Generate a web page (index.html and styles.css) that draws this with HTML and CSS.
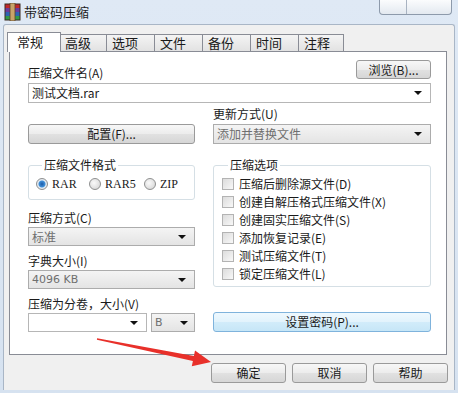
FILE: index.html
```html
<!DOCTYPE html>
<html lang="zh-CN">
<head>
    <meta charset="UTF-8">
    <title>带密码压缩</title>
    <link rel="stylesheet" href="styles.css">
</head>
<body>
    <div class="window">
        <div class="titlebar">
            <svg class="app-icon" width="19" height="18" viewBox="0 0 19 18">
                <rect x="2" y="1" width="15" height="4" fill="#c0282d"/>
                <rect x="2" y="5" width="15" height="4" fill="#6a3b9c"/>
                <rect x="2" y="9" width="15" height="4" fill="#2c64b4"/>
                <rect x="2" y="13" width="15" height="4" fill="#2f9a47"/>
                <rect x="2" y="1" width="15" height="16" fill="none" stroke="#3a2a20" stroke-width="1"/>
                <rect x="7" y="0" width="5" height="18" fill="#c7a36a" stroke="#5a4326" stroke-width="0.8"/>
            </svg>
            <span class="title">带密码压缩</span>
            <div class="caption-btns"><span></span><span></span></div>
        </div>

        <div class="frame">
            <div class="tabs">
                <div class="tab active">常规</div>
                <div class="tab first">高级</div>
                <div class="tab">选项</div>
                <div class="tab">文件</div>
                <div class="tab">备份</div>
                <div class="tab">时间</div>
                <div class="tab last">注释</div>
            </div>

            <div class="panel">
                <div class="row-top">
                    <span class="lbl">压缩文件名(A)</span>
                    <div class="btn btn-browse">浏览(B)...</div>
                </div>
                <div class="combo combo-name"><span>测试文档.rar</span><i class="arrow"></i></div>

                <div class="cols">
                    <div class="col">
                        <div class="btn btn-config">配置(F)...</div>
                        <fieldset class="group group-format">
                            <legend>压缩文件格式</legend>
                            <div class="radios">
                                <label class="radio checked"><i></i>RAR</label>
                                <label class="radio"><i></i>RAR5</label>
                                <label class="radio"><i></i>ZIP</label>
                            </div>
                        </fieldset>
                        <div class="field">
                            <span class="lbl">压缩方式(C)</span>
                            <div class="combo dim"><span>标准</span><i class="arrow"></i></div>
                        </div>
                        <div class="field">
                            <span class="lbl">字典大小(I)</span>
                            <div class="combo dim"><span class="latin">4096 KB</span><i class="arrow"></i></div>
                        </div>
                        <div class="field">
                            <span class="lbl">压缩为分卷，大小(V)</span>
                            <div class="split">
                                <div class="combo combo-vol"><span></span><i class="arrow"></i></div>
                                <div class="combo combo-unit dim"><span class="latin">B</span><i class="arrow"></i></div>
                            </div>
                        </div>
                    </div>

                    <div class="col">
                        <span class="lbl lbl-update">更新方式(U)</span>
                        <div class="combo dim combo-update"><span>添加并替换文件</span><i class="arrow"></i></div>
                        <fieldset class="group group-options">
                            <legend>压缩选项</legend>
                            <label class="check"><i></i>压缩后删除源文件(D)</label>
                            <label class="check"><i></i>创建自解压格式压缩文件(X)</label>
                            <label class="check"><i></i>创建固实压缩文件(S)</label>
                            <label class="check"><i></i>添加恢复记录(E)</label>
                            <label class="check"><i></i>测试压缩文件(T)</label>
                            <label class="check"><i></i>锁定压缩文件(L)</label>
                        </fieldset>
                        <div class="btn btn-pass">设置密码(P)...</div>
                    </div>
                </div>
            </div>

            <div class="actions">
                <div class="btn btn-action">确定</div>
                <div class="btn btn-action">取消</div>
                <div class="btn btn-action">帮助</div>
            </div>
        </div>

        <svg class="pointer" width="458" height="393" viewBox="0 0 458 393">
            <polygon fill="#e8302a" points="97.1,338.3 193.9,356 195,350.6 211,362 191.8,366.2 192.9,360.9 96.9,339.7"/>
        </svg>
    </div>
</body>
</html>
```

FILE: styles.css
```css
body {
    margin: 0;
    background: #dbe6f2;
    font-family: "Noto Sans CJK SC", "Liberation Sans", sans-serif;
    font-size: 12px;
    color: #1a1a1a;
}

.window {
    position: relative;
    width: 458px;
    height: 393px;
    display: flex;
    flex-direction: column;
    background: linear-gradient(#dfe9f5, #d6e2f0);
    overflow: hidden;
}

/* 标题栏 */
.titlebar {
    height: 24px;
    display: flex;
    align-items: center;
    padding-left: 3px;
    flex-shrink: 0;
}

.app-icon {
    display: block;
    margin-right: 2px;
}

.title {
    font-size: 13px;
    line-height: 14px;
    color: #1e1e1e;
}

.caption-btns {
    display: flex;
    align-self: flex-start;
    margin-left: auto;
    margin-right: 6px;
    height: 14px;
    border: 1px solid #8d9aab;
    border-top: none;
    border-radius: 0 0 4px 4px;
    background: linear-gradient(#fbfcfd, #e3e9f0);
}

.caption-btns span {
    width: 26px;
}

.caption-btns span + span {
    width: 44px;
    border-left: 1px solid #a8b3c1;
}

/* 主体 */
.frame {
    flex: 1;
    margin: 0 3px 3px 3px;
    padding: 7px 0 0 3px;
    background: #f0f0f0;
    border: 1px solid #a9b6c6;
    border-bottom: none;
    border-radius: 3px 3px 0 0;
}

.tabs {
    display: flex;
    align-items: flex-end;
    height: 19px;
}

.tab {
    box-sizing: border-box;
    width: 49px;
    height: 17px;
    margin-left: -1px;
    padding-left: 5px;
    border: 1px solid #898c95;
    border-bottom: none;
    background: linear-gradient(#f4f4f4, #e2e2e2);
    font-size: 13px;
    line-height: 16px;
}

.tab.first {
    width: 48px;
    margin-left: -2px;
}

.tab.last {
    width: 46px;
}

.tab.active {
    position: relative;
    z-index: 2;
    width: 54px;
    height: 20px;
    margin: 0 0 -1px 0;
    padding-left: 9px;
    background: #fff;
    line-height: 17px;
}

.panel {
    box-sizing: border-box;
    height: 304px;
    margin: 0 7px 0 2px;
    padding: 8px 15px 0 18px;
    background: #fff;
    border: 1px solid #898c95;
}

.lbl {
    display: block;
    line-height: 14px;
}

.row-top {
    display: flex;
    justify-content: space-between;
    height: 20px;
}

.row-top .lbl {
    align-self: flex-end;
}

/* 按钮 */
.btn {
    box-sizing: border-box;
    display: flex;
    justify-content: center;
    align-items: center;
    height: 20px;
    border: 1px solid #9a9a9a;
    border-radius: 3px;
    background: linear-gradient(#f7f7f7, #ececec 50%, #e1e1e1 51%, #d6d6d6);
    line-height: 14px;
}

.btn-browse {
    width: 75px;
    height: 19px;
}

.btn-config {
    margin-top: 21px;
}

.btn-pass {
    margin-top: 25px;
    border-color: #7fb3dc;
    background: linear-gradient(#eef8fe, #e2f3fc 50%, #d2ecfa 51%, #c6e6f7);
}

.actions {
    display: flex;
    justify-content: flex-end;
    gap: 6px;
    margin-top: 8px;
    padding-right: 6px;
}

.btn-action {
    width: 75px;
}

/* 下拉框 */
.combo {
    box-sizing: border-box;
    display: flex;
    align-items: center;
    height: 19px;
    padding: 0 8px 0 3px;
    border: 1px solid #b6b6b6;
    background: #fff;
    line-height: 14px;
}

.combo span {
    flex: 1;
}

.combo.dim {
    color: #6f6f6f;
    border-color: #acacac;
    background: linear-gradient(#f4f4f4, #e4e4e4);
}

.combo-name {
    height: 20px;
    margin-top: 3px;
}

.arrow {
    width: 0;
    height: 0;
    border-left: 4px solid transparent;
    border-right: 4px solid transparent;
    border-top: 4px solid #111;
}

.latin {
    font-family: "DejaVu Sans", sans-serif;
    font-size: 11px;
}

.cols {
    display: grid;
    grid-template-columns: 167px 218px;
    column-gap: 18px;
}

.col {
    display: flex;
    flex-direction: column;
}

.lbl-update {
    margin-top: 4px;
}

.combo-update {
    height: 20px;
    margin-top: 3px;
}

/* 分组框 */
.group {
    margin: 14px 0 0 0;
    padding: 0;
    border: 1px solid #d5dfe5;
    border-radius: 3px;
}

.group legend {
    margin-left: 6px;
    padding: 0 2px;
    line-height: 14px;
}

.group-format {
    padding: 5px 0 8px 7px;
    margin-bottom: 11px;
}

.radios {
    display: grid;
    grid-template-columns: 53px 55px auto;
    height: 14px;
}

.radio {
    display: flex;
    align-items: center;
    gap: 4px;
    font-family: "Liberation Serif", serif;
    font-size: 12px;
    line-height: 14px;
}

.radio i {
    box-sizing: border-box;
    width: 12px;
    height: 12px;
    border: 1px solid #8e8f8f;
    border-radius: 50%;
    background: radial-gradient(circle at 40% 40%, #fafafa, #d0d0d0);
}

.radio.checked i {
    background: radial-gradient(circle, #1c5aa6 0, #3f8fd8 3px, #e8eef4 4px, #cfd6de);
}

.group-options {
    padding: 3px 0 3px 8px;
}

.check {
    display: flex;
    align-items: center;
    gap: 5px;
    height: 18px;
    line-height: 14px;
}

.check i {
    box-sizing: border-box;
    width: 12px;
    height: 12px;
    border: 1px solid #b3b3b3;
    background: linear-gradient(135deg, #dcdcdc, #f8f8f8);
}

.field {
    margin-top: 8px;
}

.group-format + .field {
    margin-top: 0;
}

.field .combo {
    margin-top: 2px;
}

.split {
    display: flex;
    gap: 4px;
}

.combo-vol {
    width: 119px;
}

.combo-unit {
    width: 44px;
    padding-right: 6px;
}

/* 红色箭头 */
.pointer {
    position: absolute;
    left: 0;
    top: 0;
    pointer-events: none;
}
```
